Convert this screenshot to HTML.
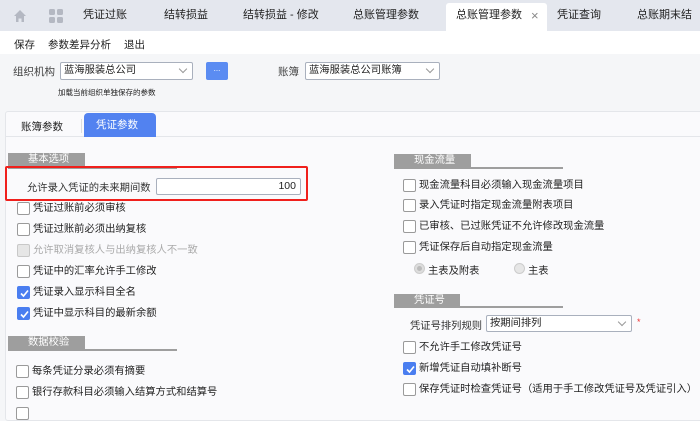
<!DOCTYPE html>
<html><head><meta charset="utf-8"><style>
*{margin:0;padding:0;box-sizing:border-box}
body{width:700px;height:410px;overflow:hidden;background:#f5f6f8;font-family:"Liberation Sans","Noto Sans CJK SC",sans-serif;font-size:10.3px;color:#222;position:relative}
.a{position:absolute;white-space:nowrap}
.tab{position:absolute;top:0;height:31px;line-height:31px;font-size:11px;color:#222}
.cb{position:absolute;width:13px;height:13px;border:1px solid #9a9a9a;background:#fff;border-radius:2px}
.cb.on{background:#4a7ef0;border-color:#4a7ef0}
.cb.dis{background:#e6e6e6;border-color:#c8c8c8}
.cb svg{position:absolute;left:1px;top:1px}
.lbl{position:absolute;font-size:10.3px;line-height:13px;white-space:nowrap}
.hdr{position:absolute;height:14px;background:#9e9e9e;color:#fff;font-size:10.3px;line-height:14px;padding-left:20px}
.hl{position:absolute;height:2px;background:#9e9e9e}
.sel{position:absolute;border:1px solid #a9b0bd;background:#fff;border-radius:2px;font-size:10.3px;padding-left:3px;white-space:nowrap;overflow:hidden}
.chev{position:absolute;right:6px;top:3px;width:6px;height:6px;border-right:1px solid #999;border-bottom:1px solid #999;transform:rotate(45deg)}
</style></head><body>
<div class="a" style="left:0;top:0;width:700px;height:31px;background:#e4e7ee"></div>
<div class="a" style="left:446px;top:3px;width:101px;height:28px;background:#fff;border-radius:3px 3px 0 0"></div>
<svg class="a" style="left:13px;top:9px" width="14" height="14"><path d="M7 1 L13 7 L11 7 L11 13 L8.5 13 L8.5 9.5 L5.5 9.5 L5.5 13 L3 13 L3 7 L1 7 Z" fill="#b4b8c2"/></svg>
<svg class="a" style="left:49px;top:9px" width="14" height="14"><rect x="0" y="0" width="6" height="6" rx="1.5" fill="#b4b8c2"/><rect x="8" y="0" width="6" height="6" rx="1.5" fill="#b4b8c2"/><rect x="0" y="8" width="6" height="6" rx="1.5" fill="#b4b8c2"/><rect x="8" y="8" width="6" height="6" rx="1.5" fill="#b4b8c2"/></svg>
<div class="tab" style="left:83px">凭证过账</div>
<div class="tab" style="left:164px">结转损益</div>
<div class="tab" style="left:243px">结转损益 - 修改</div>
<div class="tab" style="left:353px">总账管理参数</div>
<div class="tab" style="left:456px">总账管理参数</div>
<div class="tab" style="left:531px;color:#888;font-size:13px">×</div>
<div class="tab" style="left:557px">凭证查询</div>
<div class="tab" style="left:637px">总账期末结账</div>
<div class="a" style="left:0;top:31px;width:700px;height:23px;background:#fff"></div>
<div class="a" style="left:14px;top:37px;font-size:10.5px">保存</div>
<div class="a" style="left:48px;top:37px;font-size:10.5px">参数差异分析</div>
<div class="a" style="left:124px;top:37px;font-size:10.5px">退出</div>
<div class="a" style="left:13px;top:64px;color:#444;font-size:10.5px">组织机构</div>
<div class="sel" style="left:60px;top:62px;width:133px;height:18px;line-height:16px">蓝海服装总公司<span class="chev"></span></div>
<div class="a" style="left:206px;top:62px;width:22px;height:18px;background:#5b8cf2;border-radius:2px;color:#fff;font-size:8px;text-align:center;line-height:14px">...</div>
<div class="a" style="left:278px;top:64px;color:#444;font-size:10.5px">账簿</div>
<div class="sel" style="left:305px;top:62px;width:135px;height:18px;line-height:16px">蓝海服装总公司账簿<span class="chev"></span></div>
<div class="a" style="left:58px;top:87px;font-size:7.5px">加载当前组织单独保存的参数</div>
<div class="a" style="left:5px;top:111px;width:700px;height:310px;background:#fafafc;border:1px solid #e4e6ea;border-radius:3px"></div>
<div class="a" style="left:5px;top:136px;width:700px;height:1px;background:#e4e6ea"></div>
<div class="a" style="left:21px;top:119px;font-size:10.5px">账簿参数</div>
<div class="a" style="left:81px;top:119px;width:1px;height:14px;background:#ddd"></div>
<div class="a" style="left:84px;top:113px;width:72px;height:24px;background:#5282f0;border-radius:4px 4px 0 0;color:#fff;line-height:24px;padding-left:12px;font-size:10.5px">凭证参数</div>
<div class="hdr" style="left:8px;top:153px;width:77px">基本选项</div>
<div class="hl" style="left:8px;top:167px;width:169px"></div>
<div class="a" style="left:5px;top:166px;width:303px;height:35px;border:2px solid #f0201c;border-radius:2px"></div>
<div class="a" style="left:27px;top:179px;color:#333">允许录入凭证的未来期间数</div>
<div class="a" style="left:156px;top:178px;width:145px;height:17px;border:1px solid #a9b0bd;background:#fff;border-radius:2px;text-align:right;padding-right:4px;line-height:15px;font-size:10.5px">100</div>
<div id="L"></div>
<div class="hdr" style="left:8px;top:336px;width:77px">数据校验</div>
<div class="hl" style="left:8px;top:349px;width:169px"></div>
<div class="hdr" style="left:394px;top:154px;width:77px">现金流量</div>
<div class="hl" style="left:394px;top:167px;width:169px"></div>
<div class="hdr" style="left:394px;top:294px;width:66px">凭证号</div>
<div class="hl" style="left:394px;top:306px;width:169px"></div>
<div class="a" style="left:410px;top:317px;color:#333">凭证号排列规则</div>
<div class="sel" style="left:486px;top:315px;width:146px;height:17px;line-height:15px">按期间排列<span class="chev"></span></div>
<div class="a" style="left:637px;top:317px;color:#e33;font-size:9px">*</div>
<div class="a" style="left:414px;top:263px;width:11px;height:11px;border-radius:50%;background:#ddd;border:1px solid #ccc"></div>
<div class="a" style="left:417px;top:266px;width:5px;height:5px;border-radius:50%;background:#bbb"></div>
<div class="a" style="left:428px;top:262px">主表及附表</div>
<div class="a" style="left:514px;top:263px;width:11px;height:11px;border-radius:50%;background:#e6e6e6;border:1px solid #ccc"></div>
<div class="a" style="left:528px;top:262px">主表</div>
<script>
var items=[
[17,202,"凭证过账前必须审核",0],[17,223,"凭证过账前必须出纳复核",0],[17,244,"允许取消复核人与出纳复核人不一致",2],
[17,265,"凭证中的汇率允许手工修改",0],[17,286,"凭证录入显示科目全名",1],[17,307,"凭证中显示科目的最新余额",1],
[16,365,"每条凭证分录必须有摘要",0],[16,386,"银行存款科目必须输入结算方式和结算号",0],[16,407,"",0],
[403,179,"现金流量科目必须输入现金流量项目",0],[403,199,"录入凭证时指定现金流量附表项目",0],[403,220,"已审核、已过账凭证不允许修改现金流量",0],[403,241,"凭证保存后自动指定现金流量",0],
[403,341,"不允许手工修改凭证号",0],[403,362,"新增凭证自动填补断号",1],[403,383,"保存凭证时检查凭证号（适用于手工修改凭证号及凭证引入）",0]];
var h="";items.forEach(function(i){var c=i[3]==1?" on":i[3]==2?" dis":"";
h+='<div class="cb'+c+'" style="left:'+i[0]+'px;top:'+i[1]+'px">'+(i[3]==1?'<svg width="11" height="11"><path d="M2 5.5 L4.5 8 L9 2.5" stroke="#fff" stroke-width="1.6" fill="none"/></svg>':'')+'</div>';
h+='<div class="lbl" style="left:'+(i[0]+16)+'px;top:'+i[1]+'px;'+(i[3]==2?'color:#aaa':'')+'">'+i[2]+'</div>';});
document.getElementById("L").outerHTML=h;
</script>
</body></html>
